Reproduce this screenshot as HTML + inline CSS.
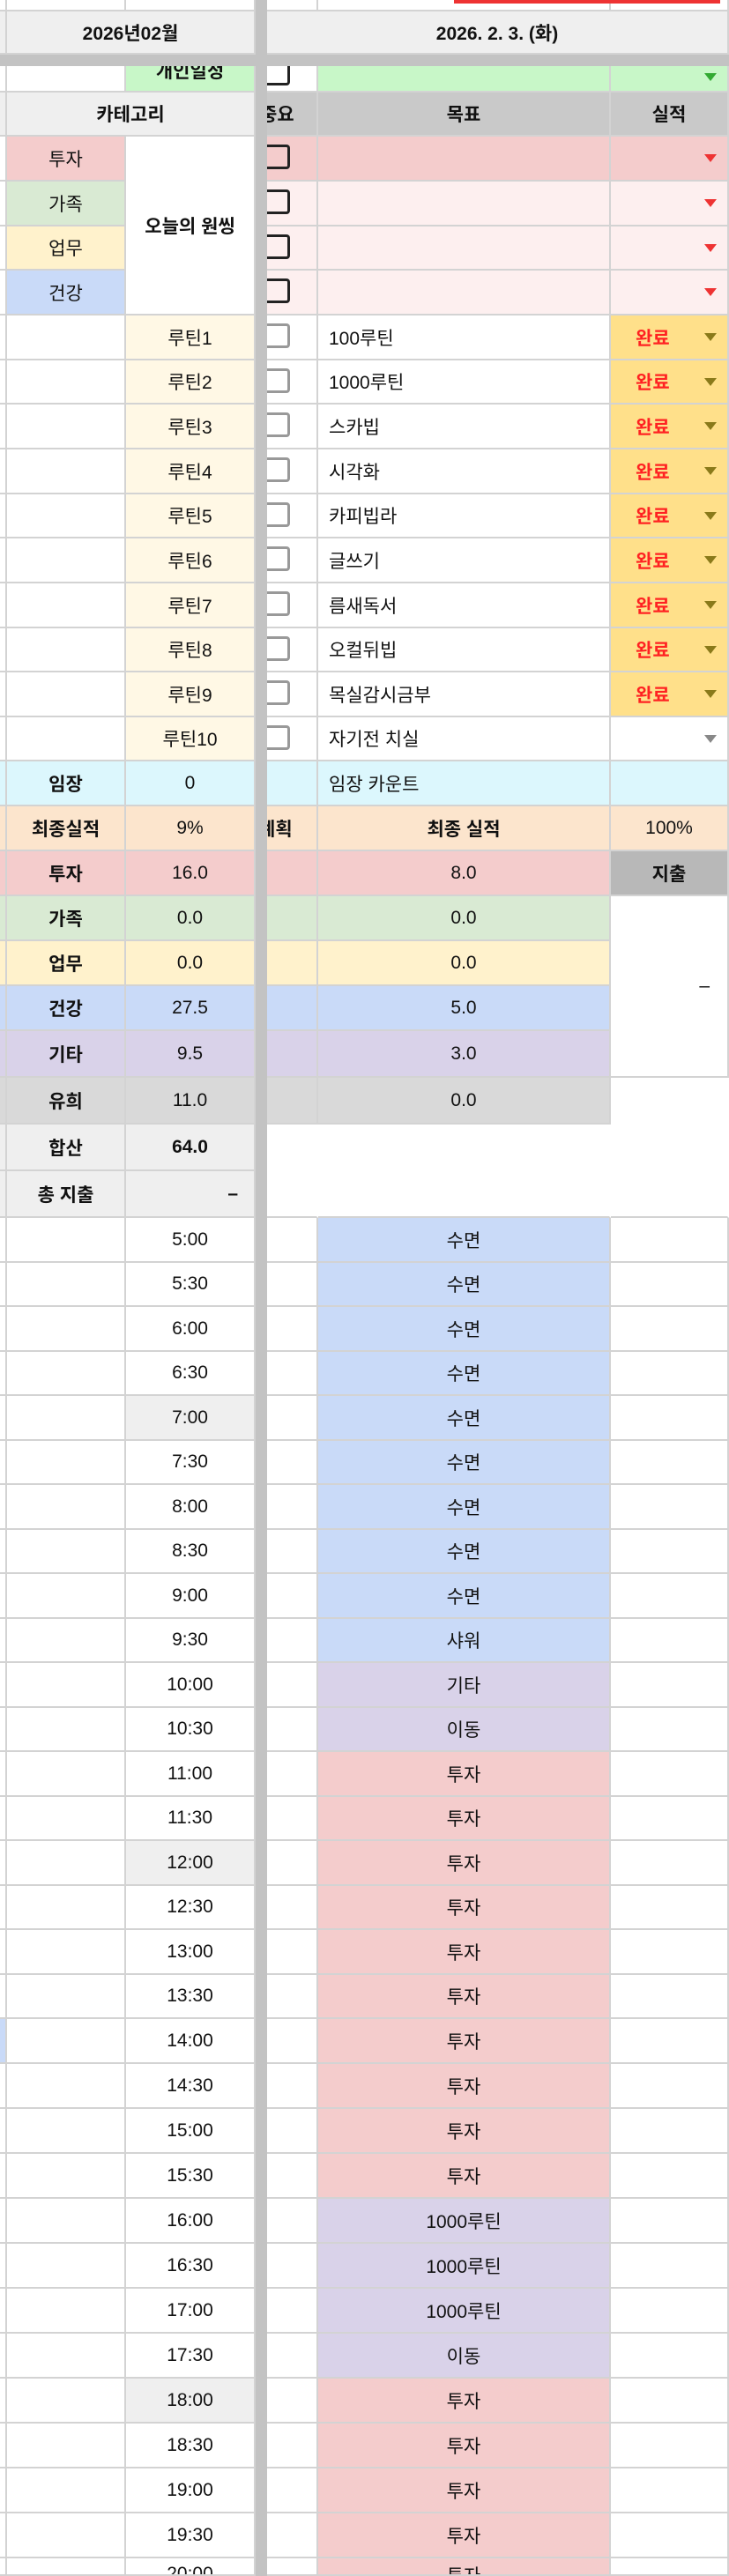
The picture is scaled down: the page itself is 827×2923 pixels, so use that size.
<!DOCTYPE html>
<html><head><meta charset="utf-8"><style>
html,body{margin:0;padding:0;background:#fff;width:827px;height:2923px;overflow:hidden}
body{font-family:"Liberation Sans","Noto Sans CJK KR",sans-serif;font-size:21px;color:#111}
.gd{position:absolute;left:0;top:0;width:827px;display:grid;
grid-template-columns:8px 135px 147px 13px 58px 332px 134px;
grid-template-rows:13px 49px 13px 30px 50px 51px 51px 50px 51px
 51px 50px 51px 51px 50px 51px 51px 50px 51px
 50px 51px 51px 51px 51px 51px 51px 53px 53px 53px 53px
 51px 50px 51px 50px 51px 50px 51px 50px 51px 50px 51px 50px 51px 50px 51px 50px 51px 50px 51px 51px 51px 51px 51px 51px 51px 51px 51px 51px 51px 51px 20px;}
.gd>div{box-sizing:border-box;border-right:2px solid #d3d3d3;border-bottom:2px solid #d3d3d3;display:flex;align-items:center;justify-content:center;white-space:nowrap;overflow:hidden;position:relative}
.gd>div.dv{grid-column:4;grid-row:1/-1;background:#c3c3c3;border:none}
.gd>div.bar{grid-column:1/-1;grid-row:3;background:#c3c3c3;border:none}
.bd{font-weight:bold}
.p{background:#f4cccc}.g{background:#d9ead3}.y{background:#fff2cc}.b{background:#c9daf8}.v{background:#d9d2e9}
.gr{background:#d9d9d9}.c{background:#dcf7fd}.o{background:#fce5cd}.cr{background:#fff8e5}.lp{background:#fdefef}
.h{background:#efefef}.gn{background:#c8f7c8}.hg{background:#c9c9c9}
.gd>div.dn{background:#ffe08a;color:#f22;font-weight:bold;justify-content:flex-start;padding-left:28px}
.gd>div.l{justify-content:flex-start;padding-left:12px}
.cb{position:absolute;left:0;top:9px;width:26px;height:28px;box-sizing:border-box;border:3px solid #999;border-left:none;border-radius:0 4px 4px 0}
.cbk{border-color:#222}
.tri{position:absolute;right:12px;top:20px;width:0;height:0;border-left:7px solid transparent;border-right:7px solid transparent;border-top:9px solid #e33}
.ol{border-top-color:#8a7a1a}.gy{border-top-color:#888}.gt{border-top-color:#3a3}
.gd>div.nb{border-right-color:transparent;border-bottom-color:transparent}
.gd>div.nr{border-right-color:transparent}
</style></head><body>
<div style="position:absolute;left:515px;top:0;width:302px;height:4px;background:#e33;z-index:2"></div>
<div class="gd">
<div class="dv"></div><div class="bar"></div>
<!-- r1 -->
<div></div><div></div><div></div><div></div><div></div><div></div>
<!-- r2 -->
<div class="h"></div><div class="h bd" style="grid-column:span 2">2026년02월</div><div class="h bd" style="grid-column:span 3">2026. 2. 3. (화)</div>
<!-- r4 -->
<div></div><div></div><div class="gn bd" style="align-items:flex-start;line-height:14px">개인일정</div><div><div class="cb cbk" style="top:-6px"></div></div><div class="gn"></div><div class="gn"><div class="tri gt" style="top:8px"></div></div>
<!-- r5 -->
<div class="h"></div><div class="h bd" style="grid-column:span 2">카테고리</div><div class="hg bd" style="justify-content:flex-start;text-indent:-8px">중요</div><div class="hg bd">목표</div><div class="hg bd">실적</div>
<!-- goals -->
<div></div><div class="p">투자</div><div class="bd" style="grid-row:span 4">오늘의 원씽</div><div class="p"><div class="cb cbk"></div></div><div class="p"></div><div class="p"><div class="tri"></div></div>
<div></div><div class="g">가족</div><div class="lp"><div class="cb cbk"></div></div><div class="lp"></div><div class="lp"><div class="tri"></div></div>
<div></div><div class="y">업무</div><div class="lp"><div class="cb cbk"></div></div><div class="lp"></div><div class="lp"><div class="tri"></div></div>
<div></div><div class="b">건강</div><div class="lp"><div class="cb cbk"></div></div><div class="lp"></div><div class="lp"><div class="tri"></div></div>
<!-- routines -->
<div></div><div></div><div class="cr">루틴1</div><div><div class="cb"></div></div><div class="l">100루틴</div><div class="dn">완료<div class="tri ol"></div></div>
<div></div><div></div><div class="cr">루틴2</div><div><div class="cb"></div></div><div class="l">1000루틴</div><div class="dn">완료<div class="tri ol"></div></div>
<div></div><div></div><div class="cr">루틴3</div><div><div class="cb"></div></div><div class="l">스카빕</div><div class="dn">완료<div class="tri ol"></div></div>
<div></div><div></div><div class="cr">루틴4</div><div><div class="cb"></div></div><div class="l">시각화</div><div class="dn">완료<div class="tri ol"></div></div>
<div></div><div></div><div class="cr">루틴5</div><div><div class="cb"></div></div><div class="l">카피빕라</div><div class="dn">완료<div class="tri ol"></div></div>
<div></div><div></div><div class="cr">루틴6</div><div><div class="cb"></div></div><div class="l">글쓰기</div><div class="dn">완료<div class="tri ol"></div></div>
<div></div><div></div><div class="cr">루틴7</div><div><div class="cb"></div></div><div class="l">름새독서</div><div class="dn">완료<div class="tri ol"></div></div>
<div></div><div></div><div class="cr">루틴8</div><div><div class="cb"></div></div><div class="l">오컬뒤빕</div><div class="dn">완료<div class="tri ol"></div></div>
<div></div><div></div><div class="cr">루틴9</div><div><div class="cb"></div></div><div class="l">목실감시금부</div><div class="dn">완료<div class="tri ol"></div></div>
<div></div><div></div><div class="cr">루틴10</div><div><div class="cb"></div></div><div class="l">자기전 치실</div><div><div class="tri gy"></div></div>
<!-- summary -->
<div class="c"></div><div class="c bd">임장</div><div class="c">0</div><div class="c"></div><div class="c l">임장 카운트</div><div class="c"></div>
<div class="o"></div><div class="o bd">최종실적</div><div class="o">9%</div><div class="o bd" style="justify-content:flex-start;text-indent:-10px">계획</div><div class="o bd">최종 실적</div><div class="o">100%</div>
<div class="p"></div><div class="p bd">투자</div><div class="p">16.0</div><div class="p"></div><div class="p">8.0</div><div class="bd" style="background:#b8b8b8">지출</div>
<div class="g"></div><div class="g bd">가족</div><div class="g">0.0</div><div class="g"></div><div class="g">0.0</div><div style="grid-row:span 4;justify-content:flex-end;padding-right:20px">–</div>
<div class="y"></div><div class="y bd">업무</div><div class="y">0.0</div><div class="y"></div><div class="y">0.0</div>
<div class="b"></div><div class="b bd">건강</div><div class="b">27.5</div><div class="b"></div><div class="b">5.0</div>
<div class="v"></div><div class="v bd">기타</div><div class="v">9.5</div><div class="v"></div><div class="v">3.0</div>
<div class="gr"></div><div class="gr bd">유희</div><div class="gr">11.0</div><div class="gr"></div><div class="gr">0.0</div><div class="nb"></div>
<div class="h"></div><div class="h bd">합산</div><div class="h bd">64.0</div><div class="nb"></div><div class="nb"></div><div class="nb"></div>
<div class="h"></div><div class="h bd">총 지출</div><div class="h bd" style="justify-content:flex-end;padding-right:18px">–</div><div class="nr"></div><div class="nr"></div><div class="nr"></div>
<!-- times -->
<div></div><div></div><div>5:00</div><div></div><div class="b">수면</div><div></div>
<div></div><div></div><div>5:30</div><div></div><div class="b">수면</div><div></div>
<div></div><div></div><div>6:00</div><div></div><div class="b">수면</div><div></div>
<div></div><div></div><div>6:30</div><div></div><div class="b">수면</div><div></div>
<div></div><div></div><div class="h">7:00</div><div></div><div class="b">수면</div><div></div>
<div></div><div></div><div>7:30</div><div></div><div class="b">수면</div><div></div>
<div></div><div></div><div>8:00</div><div></div><div class="b">수면</div><div></div>
<div></div><div></div><div>8:30</div><div></div><div class="b">수면</div><div></div>
<div></div><div></div><div>9:00</div><div></div><div class="b">수면</div><div></div>
<div></div><div></div><div>9:30</div><div></div><div class="b">샤워</div><div></div>
<div></div><div></div><div>10:00</div><div></div><div class="v">기타</div><div></div>
<div></div><div></div><div>10:30</div><div></div><div class="v">이동</div><div></div>
<div></div><div></div><div>11:00</div><div></div><div class="p">투자</div><div></div>
<div></div><div></div><div>11:30</div><div></div><div class="p">투자</div><div></div>
<div></div><div></div><div class="h">12:00</div><div></div><div class="p">투자</div><div></div>
<div></div><div></div><div>12:30</div><div></div><div class="p">투자</div><div></div>
<div></div><div></div><div>13:00</div><div></div><div class="p">투자</div><div></div>
<div></div><div></div><div>13:30</div><div></div><div class="p">투자</div><div></div>
<div class="b"></div><div></div><div>14:00</div><div></div><div class="p">투자</div><div></div>
<div></div><div></div><div>14:30</div><div></div><div class="p">투자</div><div></div>
<div></div><div></div><div>15:00</div><div></div><div class="p">투자</div><div></div>
<div></div><div></div><div>15:30</div><div></div><div class="p">투자</div><div></div>
<div></div><div></div><div>16:00</div><div></div><div class="v">1000루틴</div><div></div>
<div></div><div></div><div>16:30</div><div></div><div class="v">1000루틴</div><div></div>
<div></div><div></div><div>17:00</div><div></div><div class="v">1000루틴</div><div></div>
<div></div><div></div><div>17:30</div><div></div><div class="v">이동</div><div></div>
<div></div><div></div><div class="h">18:00</div><div></div><div class="p">투자</div><div></div>
<div></div><div></div><div>18:30</div><div></div><div class="p">투자</div><div></div>
<div></div><div></div><div>19:00</div><div></div><div class="p">투자</div><div></div>
<div></div><div></div><div>19:30</div><div></div><div class="p">투자</div><div></div>
<div></div><div></div><div style="align-items:flex-start;padding-top:6px">20:00</div><div></div><div class="p" style="align-items:flex-start;padding-top:4px">투자</div><div></div>
</div>
</body></html>
